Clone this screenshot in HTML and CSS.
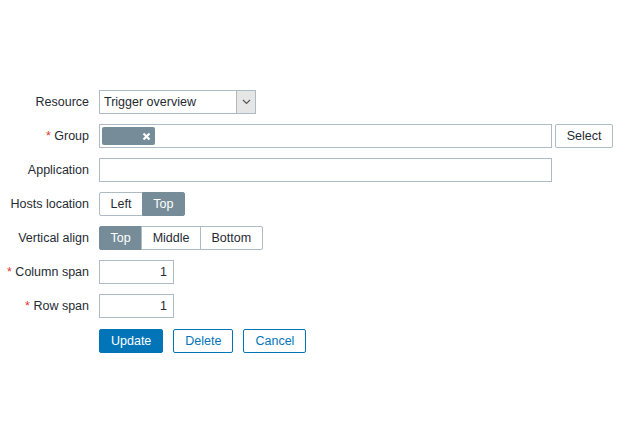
FILE: index.html
```html
<!DOCTYPE html>
<html>
<head>
<meta charset="utf-8">
<link rel="stylesheet" href="styles.css">
</head>
<body>
<form class="form">
  <div class="label">Resource</div>
  <div class="field">
    <div class="select">
      <span class="select-text">Trigger overview</span>
      <span class="select-arrow"><svg width="9" height="6" viewBox="0 0 9 6"><path d="M1 1 L4.5 4.5 L8 1" fill="none" stroke="#555" stroke-width="1.2"/></svg></span>
    </div>
  </div>

  <div class="label"><span class="req">*</span> Group</div>
  <div class="field">
    <div class="multiselect">
      <span class="tag"><span class="tag-x"><svg width="9" height="9" viewBox="0 0 9 9"><path d="M1.5 1.5 L7.5 7.5 M7.5 1.5 L1.5 7.5" stroke="#fff" stroke-width="2.2"/></svg></span></span>
    </div>
    <button type="button" class="btn-grey">Select</button>
  </div>

  <div class="label">Application</div>
  <div class="field">
    <div class="textbox wide"></div>
  </div>

  <div class="label">Hosts location</div>
  <div class="field">
    <div class="radio">
      <span class="opt">Left</span><span class="opt on">Top</span>
    </div>
  </div>

  <div class="label">Vertical align</div>
  <div class="field">
    <div class="radio">
      <span class="opt on">Top</span><span class="opt">Middle</span><span class="opt">Bottom</span>
    </div>
  </div>

  <div class="label"><span class="req">*</span> Column span</div>
  <div class="field">
    <div class="textbox num">1</div>
  </div>

  <div class="label"><span class="req">*</span> Row span</div>
  <div class="field">
    <div class="textbox num">1</div>
  </div>

  <div class="label"></div>
  <div class="field buttons">
    <button type="button" class="btn-main">Update</button>
    <button type="button" class="btn-alt">Delete</button>
    <button type="button" class="btn-alt">Cancel</button>
  </div>
</form>
</body>
</html>
```

FILE: styles.css
```css
html, body {
  margin: 0;
  padding: 0;
  background: #ffffff;
}
body {
  font-family: "Liberation Sans", Arial, sans-serif;
  font-size: 12.5px;
  color: #1f2c33;
}
.form {
  display: grid;
  grid-template-columns: 89px 1fr;
  column-gap: 10px;
  row-gap: 10px;
  padding-top: 90px;
}
.label {
  text-align: right;
  height: 24px;
  line-height: 24px;
  white-space: nowrap;
}
.req {
  color: #e33734;
}
.field {
  display: flex;
  align-items: center;
  height: 24px;
}
.select {
  box-sizing: border-box;
  width: 157px;
  height: 24px;
  border: 1px solid #acbbc4;
  display: flex;
  align-items: stretch;
  background: #fff;
}
.select-text {
  flex: 1;
  padding-left: 4px;
  line-height: 22px;
}
.select-arrow {
  width: 18px;
  background: #e6e6e6;
  border-left: 1px solid #b8b8b8;
  display: flex;
  align-items: center;
  justify-content: center;
}
.multiselect {
  box-sizing: border-box;
  width: 453px;
  height: 24px;
  border: 1px solid #acbbc4;
  display: flex;
  align-items: center;
  padding-left: 2px;
  background: #fff;
}
.tag {
  box-sizing: border-box;
  width: 53px;
  height: 18px;
  background: #768d99;
  border-radius: 2px;
  display: flex;
  align-items: center;
  justify-content: flex-end;
  padding-right: 3px;
}
.tag-x {
  display: flex;
  width: 11px;
  justify-content: center;
}
.btn-grey {
  box-sizing: border-box;
  margin-left: 3px;
  width: 58px;
  height: 24px;
  border: 1px solid #acbbc4;
  border-radius: 2px;
  background: #fff;
  color: #1f2c33;
  font-family: inherit;
  font-size: 12.5px;
  padding: 0;
}
.textbox {
  box-sizing: border-box;
  height: 24px;
  border: 1px solid #acbbc4;
  background: #fff;
  line-height: 22px;
}
.textbox.wide {
  width: 453px;
}
.textbox.num {
  width: 75px;
  text-align: right;
  padding-right: 6px;
}
.radio {
  display: flex;
  height: 24px;
}
.opt {
  box-sizing: border-box;
  height: 24px;
  line-height: 22px;
  padding: 0 10.5px;
  border: 1px solid #acbbc4;
  margin-left: -1px;
  background: #fff;
}
.opt:first-child {
  margin-left: 0;
  border-radius: 2px 0 0 2px;
}
.opt:last-child {
  border-radius: 0 2px 2px 0;
}
.opt.on {
  background: #768d99;
  border-color: #768d99;
  color: #fff;
}
.buttons {
  gap: 10px;
  margin-top: 1px;
}
.buttons button {
  box-sizing: border-box;
  height: 24px;
  padding: 0 11px;
  border-radius: 2px;
  font-family: inherit;
  font-size: 12.5px;
  border: 1px solid #0275b8;
}
.btn-main {
  background: #0275b8;
  color: #fff;
}
.btn-alt {
  background: #fff;
  color: #0275b8;
}
```
